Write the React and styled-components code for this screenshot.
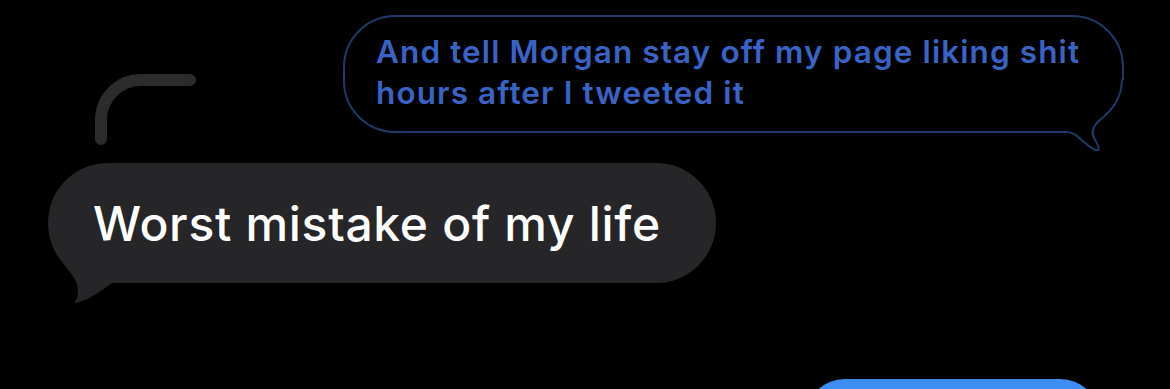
import React from 'react';
import styled, { createGlobalStyle } from 'styled-components';

const GlobalStyle = createGlobalStyle`
    html, body {
        margin: 0;
        padding: 0;
        background: #000;
        overflow: hidden;
    }
    body {
        font-family: Inter, "Noto Sans", "Liberation Sans", sans-serif;
    }
`;

const Thread = styled.div`
    width: 1170px;
    height: 389px;
    box-sizing: border-box;
    padding-top: 15px;
    display: flex;
    flex-direction: column;
    background: #000;
    overflow: hidden;
`;

const Row = styled.div`
    display: flex;
    justify-content: ${(p) => (p.$out ? 'flex-end' : 'flex-start')};
    padding: ${(p) => (p.$out ? `0 ${p.$inset}px 0 0` : `0 0 0 ${p.$inset}px`)};
    margin-top: ${(p) => p.$gap || 0}px;
`;

const OutlinedBubble = styled.div`
    position: relative;
    box-sizing: border-box;
    width: 781px;
    height: 118px;
    padding: 14px 20px 0 31px;
    border: 2px solid #1f3a66;
    border-radius: 52px;
    color: #3a63c6;
    font-size: 31.5px;
    font-weight: 600;
    line-height: 41px;
    letter-spacing: 1.1px;
    white-space: nowrap;
`;

const GrayBubble = styled.div`
    position: relative;
    box-sizing: border-box;
    height: 120px;
    display: flex;
    align-items: center;
    padding: 0 55px 0 45px;
    border-radius: 60px;
    background: #262629;
    color: #fff;
    font-size: 48px;
    font-weight: 500;
    letter-spacing: 0.7px;
    white-space: nowrap;
`;

const BlueBubble = styled.div`
    width: 295px;
    height: 80px;
    border-radius: 40px;
    background: #3d8df2;
`;

const Tail = styled.svg`
    position: absolute;
    overflow: visible;
`;

const OutTail = styled(Tail)`
    right: -8px;
    bottom: -24px;
    width: 90px;
    height: 75px;
`;

const InTail = styled(Tail)`
    left: -3px;
    top: 72px;
    width: 75px;
    height: 75px;
`;

const ReplyLine = styled(Tail)`
    left: 42px;
    top: -93px;
    width: 110px;
    height: 80px;
`;

const App = () => {
    return (
        <>
            <GlobalStyle />
            <Thread>
                <Row $out $inset={46}>
                    <OutlinedBubble>
                        And tell Morgan stay off my page liking shit
                        <br />
                        hours after I tweeted it
                        <OutTail viewBox="0 0 90 75">
                            <rect x="0" y="0" width="90" height="75" fill="#000" />
                            <path
                                d="M0 52 H26 C34 52 38 57 44 62 C50 67 54 71 58 70 C60 69 57 63 54 58 C51 52 53 46 60 40 C72 30 81 20 82 0"
                                fill="none"
                                stroke="#1f3a66"
                                strokeWidth="2"
                                strokeLinecap="round"
                            />
                        </OutTail>
                    </OutlinedBubble>
                </Row>
                <Row $inset={48} $gap={30}>
                    <GrayBubble>
                        <ReplyLine viewBox="0 0 110 80">
                            <path
                                d="M11 69 V50 A40 40 0 0 1 51 10 H100"
                                fill="none"
                                stroke="#2c2c2e"
                                strokeWidth="12"
                                strokeLinecap="round"
                            />
                        </ReplyLine>
                        Worst mistake of my life
                        <InTail viewBox="0 0 75 75">
                            <path
                                d="M7 10 C15 30 33 40 33 56 C33 62 31 65 29 68 C40 67 52 59 67 48 L67 5 Z"
                                fill="#262629"
                            />
                        </InTail>
                    </GrayBubble>
                </Row>
                <Row $out $inset={70} $gap={96}>
                    <BlueBubble />
                </Row>
            </Thread>
        </>
    );
};

export default App;
